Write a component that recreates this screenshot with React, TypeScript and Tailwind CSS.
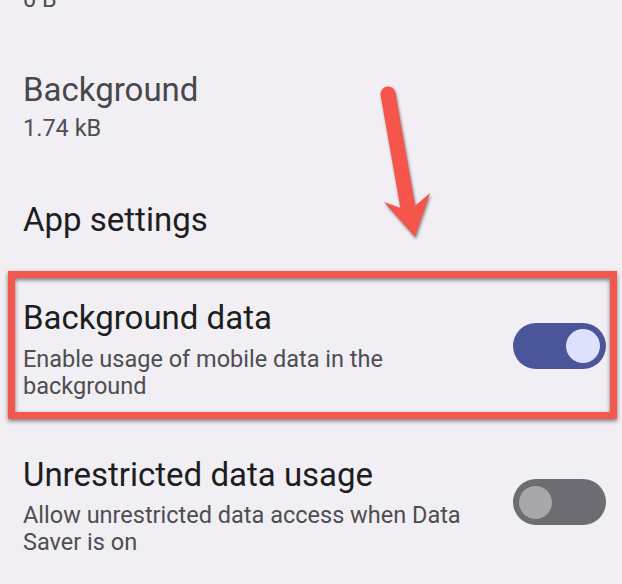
import * as React from 'react'

const FONT = { fontFamily: 'Roboto, "Noto Sans", sans-serif' }

function Toggle({ on, className }: { on: boolean; className?: string }) {
  return (
    <div
      className={
        'flex h-[46px] w-[93px] shrink-0 items-center rounded-full px-[6px] ' +
        (on ? 'justify-end bg-[#4a5699]' : 'justify-start bg-[#6d6c72]') +
        ' ' +
        (className ?? '')
      }
    >
      <span
        className={
          'block rounded-full ' +
          (on ? 'size-[34px] bg-[#dee1fb]' : 'size-[33px] bg-[#a8a7ac]')
        }
      />
    </div>
  )
}

function Arrow() {
  return (
    <svg
      className="pointer-events-none absolute left-0 top-0 drop-shadow-[1px_2px_1.5px_rgba(0,0,0,0.45)]"
      width="622"
      height="584"
      viewBox="0 0 622 584"
      aria-hidden="true"
    >
      <line x1="388" y1="94" x2="408" y2="208" stroke="#f5554a" strokeWidth="15" strokeLinecap="round" />
      <path d="M384 202 L409 211 L430 193 L415 237 Z" fill="#f5554a" />
    </svg>
  )
}

export default function App() {
  return (
    <div
      className="relative h-[584px] w-[622px] overflow-hidden bg-[#f1eff4]"
      style={FONT}
    >
      <div className="flex flex-col">
        <p className="-mt-[14px] px-[23px] text-[23.5px] leading-[27px] text-[#4e4d52]">0 B</p>

        <div className="mt-[58px] px-[23px]">
          <p className="text-[33px] leading-[38px] text-[#48474c]">Background</p>
          <p className="mt-[6px] text-[23.5px] leading-[27px] text-[#4e4d52]">1.74 kB</p>
        </div>

        <p className="mt-[59px] px-[23px] text-[33px] leading-[38px] text-[#1e1d21]">App settings</p>

        {/* highlighted row */}
        <div className="relative mt-[32px] pb-[19px] pt-[28px]">
          <div className="flex items-start pl-[23px] pr-[16px]">
            <div className="flex-1">
              <p className="text-[33px] leading-[38px] text-[#1e1d21]">Background data</p>
              <p className="mt-[9px] max-w-[420px] text-[23.5px] leading-[27px] text-[#4e4d52]">
                Enable usage of mobile data in the background
              </p>
            </div>
            <Toggle on className="mt-[24px]" />
          </div>
          <div className="pointer-events-none absolute bottom-0 left-[8px] right-[5px] top-0 border-[7px] border-[#f4574b] drop-shadow-[0_2px_2px_rgba(0,0,0,0.5)]" />
        </div>

        <div className="mt-[37px] flex items-start pl-[23px] pr-[16px]">
          <div className="flex-1">
            <p className="text-[33px] leading-[38px] text-[#1e1d21]">Unrestricted data usage</p>
            <p className="mt-[8px] max-w-[460px] text-[23.5px] leading-[27px] text-[#4e4d52]">
              Allow unrestricted data access when Data Saver is on
            </p>
          </div>
          <Toggle on={false} className="mt-[23px]" />
        </div>
      </div>

      <Arrow />
    </div>
  )
}
